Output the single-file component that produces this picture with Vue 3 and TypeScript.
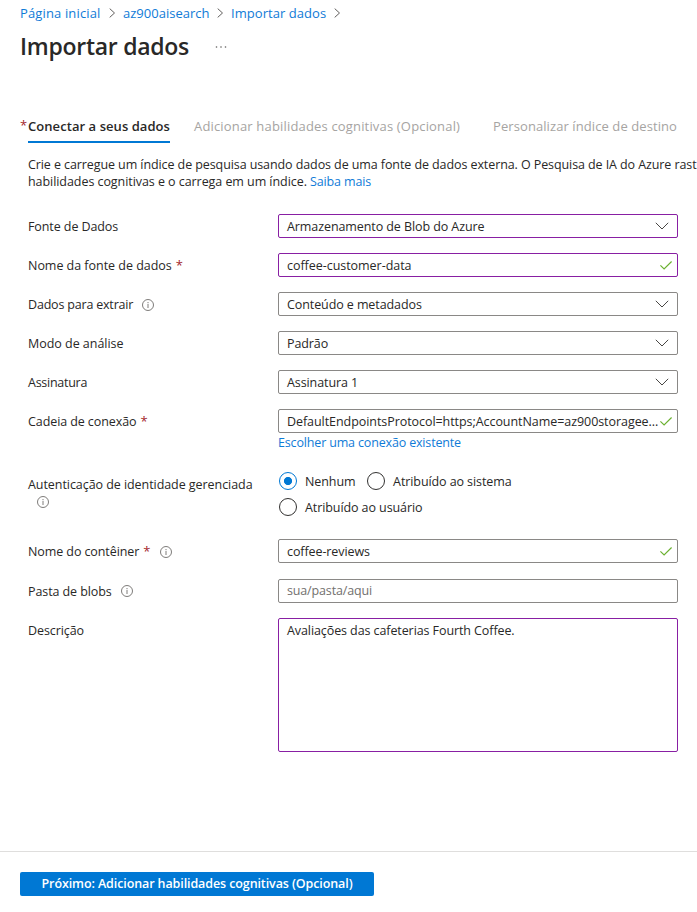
<script setup lang="ts">
import { ref } from 'vue'

interface Field {
  id: string
  label: string
  value: string
  kind: 'select' | 'input'
  required?: boolean
  info?: boolean
  valid?: boolean
  edited?: boolean
}

const crumbs = [
  { id: 'home', text: 'Página inicial' },
  { id: 'search', text: 'az900aisearch' },
  { id: 'import', text: 'Importar dados' },
]

const fields: Field[] = [
  { id: 'source', label: 'Fonte de Dados', value: 'Armazenamento de Blob do Azure', kind: 'select', edited: true },
  { id: 'name', label: 'Nome da fonte de dados', value: 'coffee-customer-data', kind: 'input', required: true, valid: true, edited: true },
  { id: 'extract', label: 'Dados para extrair', value: 'Conteúdo e metadados', kind: 'select', info: true },
  { id: 'mode', label: 'Modo de análise', value: 'Padrão', kind: 'select' },
  { id: 'subscription', label: 'Assinatura', value: 'Assinatura 1', kind: 'select' },
  {
    id: 'connection',
    label: 'Cadeia de conexão',
    value: 'DefaultEndpointsProtocol=https;AccountName=az900storagee...',
    kind: 'input',
    required: true,
    valid: true,
  },
]

const identities = ['Nenhum', 'Atribuído ao sistema', 'Atribuído ao usuário']
const identity = ref('Nenhum')
</script>

<template>
  <div class="page">
    <nav class="crumbs">
      <template v-for="c in crumbs" :key="c.id">
        <a :class="['crumb', c.id]">{{ c.text }}</a>
        <svg class="sep" width="7" height="10" viewBox="0 0 7 10"><path d="M.7.6 5.5 5 .7 9.4" /></svg>
      </template>
    </nav>

    <header class="heading">
      <h1>Importar dados</h1>
      <svg class="more" width="12" height="4" viewBox="0 0 12 4">
        <circle cx="1.5" cy="2" r=".8" /><circle cx="6" cy="2" r=".8" /><circle cx="10.5" cy="2" r=".8" />
      </svg>
    </header>

    <div class="tabs">
      <span class="mark">*</span>
      <span class="tab active">Conectar a seus dados</span>
      <span class="tab skills">Adicionar habilidades cognitivas (Opcional)</span>
      <span class="tab index">Personalizar índice de destino</span>
    </div>

    <div class="intro">
      <div class="line first">Crie e carregue um índice de pesquisa usando dados de uma fonte de dados externa. O Pesquisa de IA do Azure rast</div>
      <div class="line second">habilidades cognitivas e o carrega em um índice. <a class="link">Saiba mais</a></div>
    </div>

    <main class="form">
      <div v-for="f in fields" :key="f.id" class="row">
        <label :class="['label', f.id]">
          <span class="name">{{ f.label }}</span><span v-if="f.required" class="req">*</span>
          <svg v-if="f.info" class="info" width="12" height="12" viewBox="0 0 12 12">
            <circle cx="6" cy="6" r="5.5" /><path d="M6 3v1.2M6 5v4" />
          </svg>
        </label>
        <div :class="['box', f.kind, f.id, { edited: f.edited }]">
          <span class="value">{{ f.value }}</span>
          <svg v-if="f.kind === 'select'" class="chevron" width="14" height="8" viewBox="0 0 14 8"><path d="M.8.8 7 7 13.2.8" /></svg>
          <svg v-if="f.valid" class="check" width="12" height="9" viewBox="0 0 12 9"><path d="M.4 4.4 4.1 8 11.6.5" /></svg>
        </div>
      </div>
      <a class="link choose">Escolher uma conexão existente</a>

      <div class="row identity">
        <div class="label auth">
          <span class="name">Autenticação de identidade gerenciada</span>
          <svg class="info" width="12" height="12" viewBox="0 0 12 12">
            <circle cx="6" cy="6" r="5.5" /><path d="M6 3v1.2M6 5v4" />
          </svg>
        </div>
        <div class="radios">
          <div v-for="o in identities" :key="o" class="radio" @click="identity = o">
            <span :class="['dot', { on: identity === o }]"></span><span class="option">{{ o }}</span>
          </div>
        </div>
      </div>

      <div class="row container">
        <label class="label">
          <span class="name">Nome do contêiner</span><span class="req">*</span>
          <svg class="info near" width="12" height="12" viewBox="0 0 12 12">
            <circle cx="6" cy="6" r="5.5" /><path d="M6 3v1.2M6 5v4" />
          </svg>
        </label>
        <div class="box input">
          <span class="value">coffee-reviews</span>
          <svg class="check" width="12" height="9" viewBox="0 0 12 9"><path d="M.4 4.4 4.1 8 11.6.5" /></svg>
        </div>
      </div>

      <div class="row folder">
        <label class="label">
          <span class="name">Pasta de blobs</span>
          <svg class="info" width="12" height="12" viewBox="0 0 12 12">
            <circle cx="6" cy="6" r="5.5" /><path d="M6 3v1.2M6 5v4" />
          </svg>
        </label>
        <div class="box input placeholder"><span>sua/pasta/aqui</span></div>
      </div>

      <div class="row description">
        <label class="label"><span class="name">Descrição</span></label>
        <div class="box area edited"><span class="value">Avaliações das cafeterias Fourth Coffee.</span></div>
      </div>
    </main>

    <footer class="footer">
      <button class="next" type="button">Próximo: Adicionar habilidades cognitivas (Opcional)</button>
    </footer>
  </div>
</template>

<style>
body {
  margin: 0;
  background: #fff;
}
</style>

<style scoped>
.page {
  box-sizing: border-box;
  width: 100%;
  height: 912px;
  overflow: hidden;
  display: flex;
  flex-direction: column;
  font-family: 'Open Sans', 'Noto Sans', sans-serif;
  font-size: 12.5px;
  line-height: 18px;
  letter-spacing: -0.09px;
  color: #292827;
  white-space: nowrap;
}
.crumbs {
  display: flex;
  align-items: center;
  height: 18px;
  padding: 4px 0 0 20px;
  font-size: 13px;
}
.crumb {
  color: #0f7bd7;
  width: 81px;
  letter-spacing: 0.14px;
}
.crumb.search {
  width: 86px;
  letter-spacing: 0.01px;
}
.crumb.import {
  width: 95px;
  letter-spacing: 0.05px;
}
.sep {
  margin: 0 7px 0 8px;
  fill: none;
  stroke: #605e5c;
}
.heading {
  display: flex;
  align-items: center;
  height: 30px;
  margin-top: 10px;
  padding-left: 20px;
}
h1 {
  margin: 0;
  padding-bottom: 2px;
  width: 195px;
  font-size: 23px;
  line-height: 30px;
  font-weight: 600;
  letter-spacing: -0.27px;
}
.more {
  fill: #605e5c;
}
.tabs {
  display: flex;
  height: 26px;
  margin-top: 55px;
  padding-left: 20px;
  font-size: 13px;
  color: #a6a4a2;
}
.mark {
  width: 8px;
  color: #a4262c;
  line-height: 16px;
  letter-spacing: 0;
}
.tab.active {
  box-sizing: border-box;
  width: 142px;
  border-bottom: 2px solid #0078d4;
  color: #292827;
  font-weight: 600;
  letter-spacing: 0.06px;
}
.tab.skills {
  width: 299px;
  margin-left: 24px;
  letter-spacing: 0.17px;
}
.tab.index {
  letter-spacing: 0.087px;
}
.intro {
  height: 34px;
  margin-top: 13px;
  padding-left: 28px;
  line-height: 17px;
}
.line.second {
  letter-spacing: -0.06px;
}
.link {
  color: #0f7bd7;
}
.line .link {
  letter-spacing: -0.14px;
}
.form {
  box-sizing: border-box;
  display: flex;
  flex: none;
  flex-direction: column;
  height: 661px;
  padding: 24px 19px 0 28px;
}
.row {
  display: flex;
  flex: none;
  margin-bottom: 15px;
}
.row:nth-child(6) {
  margin-bottom: 0;
}
.label {
  display: flex;
  align-items: center;
  width: 250px;
  height: 24px;
}
.label > .name,
.value {
  padding-top: 2px;
}
.label.name,
.label.mode {
  letter-spacing: -0.03px;
}
.label.extract {
  letter-spacing: -0.19px;
}
.label.subscription {
  letter-spacing: -0.27px;
}
.req {
  margin-left: 4px;
  color: #a4262c;
  font-size: 13px;
  letter-spacing: 0;
}
.info {
  flex: none;
  margin: 1px 0 0 9px;
  fill: none;
  stroke: #6f6d6b;
  stroke-width: 0.9;
}
.info.near {
  margin-left: 10px;
}
.folder .info {
  margin-top: 0;
}
.box {
  box-sizing: border-box;
  display: flex;
  align-items: center;
  justify-content: space-between;
  width: 400px;
  height: 24px;
  padding: 0 8px;
  border: 1px solid #8a8886;
  border-radius: 2px;
}
.box.input {
  padding-right: 5px;
}
.box.edited {
  border-color: #881fa3;
}
.box.connection {
  letter-spacing: -0.06px;
}
.box.source {
  letter-spacing: -0.085px;
}
.box.name {
  letter-spacing: -0.04px;
}
.chevron,
.check {
  flex: none;
  fill: none;
  stroke: #484644;
}
.check {
  stroke: #6bb130;
  stroke-width: 1.2;
}
.choose {
  height: 18px;
  padding-left: 250px;
  line-height: 20px;
  letter-spacing: -0.16px;
}
.row.identity {
  height: 52px;
  margin: 17px 0 19px;
}
.auth {
  display: block;
  height: auto;
  padding-top: 6px;
  letter-spacing: -0.06px;
}
.auth .name {
  display: block;
}
.auth .info {
  display: block;
  margin: 2px 0 0 9px;
}
.radios {
  display: flex;
  flex-wrap: wrap;
  align-content: flex-start;
  width: 300px;
  padding: 4px 0 0 1px;
  column-gap: 11.6px;
  row-gap: 8px;
}
.radio {
  display: flex;
  gap: 8px;
  height: 18px;
}
.option {
  line-height: 20px;
}
.dot {
  box-sizing: border-box;
  width: 18px;
  height: 18px;
  border: 1px solid #323130;
  border-radius: 50%;
}
.dot.on {
  border-color: #0078d4;
  background: radial-gradient(circle, #0078d4 3.7px, transparent 4.4px);
}
.row.container {
  margin-bottom: 16px;
}
.placeholder {
  color: #72706e;
  letter-spacing: -0.15px;
}
.box.area {
  align-items: flex-start;
  height: 134px;
  padding-top: 1px;
}
.footer {
  flex: 1;
  padding: 20px 20px 0;
  border-top: 1px solid #dfdedd;
}
.next {
  display: block;
  box-sizing: border-box;
  width: 354px;
  height: 24px;
  padding: 0;
  border: 0;
  border-radius: 2px;
  background: #0078d4;
  color: #fff;
  font: 600 12.5px/22px 'Open Sans', 'Noto Sans', sans-serif;
  letter-spacing: -0.1px;
}
</style>
